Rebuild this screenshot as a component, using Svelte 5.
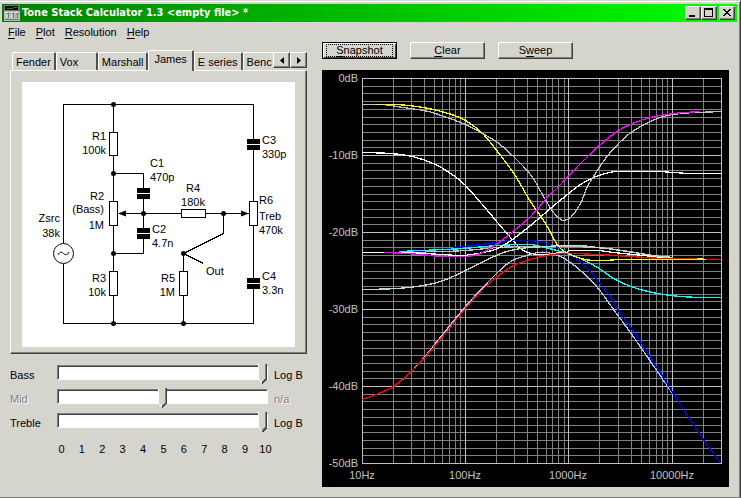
<script lang="ts">
	type Point = [number, number];
	type Curve = { name: string; color: string; points: Point[] };

	const menus = ['File', 'Plot', 'Resolution', 'Help'];
	const tabs = ['Fender', 'Vox', 'Marshall', 'James', 'E series', 'Benc'];
	const actions = [
		{ label: 'Snapshot', key: 0 },
		{ label: 'Clear', key: 0 },
		{ label: 'Sweep', key: 1 }
	];

	let activeTab = $state('James');

	let controls = $state([
		{ id: 'bass', label: 'Bass', value: 10, taper: 'Log B', disabled: false },
		{ id: 'mid', label: 'Mid', value: 5, taper: 'n/a', disabled: true },
		{ id: 'treble', label: 'Treble', value: 10, taper: 'Log B', disabled: false }
	]);

	const scale = [0, 1, 2, 3, 4, 5, 6, 7, 8, 9, 10];

	// Plot area, in graph units
	const left = 40;
	const top = 8;
	const width = 359;
	const height = 385;
	const decade = 103.2;

	const xOf = (hz: number) => left + Math.round(Math.log10(hz / 10) * decade);
	const yOf = (db: number) => top + Math.round(-db * 7.7);

	const freqs: number[] = [];
	for (let base = 10; base <= 10000; base *= 10) {
		for (let n = 1; n < 10; n++) {
			if (base * n < 30000) freqs.push(base * n);
		}
	}
	const minorFreqs = freqs.filter((hz) => Math.log10(hz) % 1 !== 0);
	const majorFreqs = [10, 100, 1000, 10000];
	const levels = Array.from({ length: 51 }, (_, i) => -i);
	const minorLevels = levels.filter((db) => db % 10 !== 0);
	const majorLevels = levels.filter((db) => db % 10 === 0);

	const curves: Curve[] = [
		{
			name: 'white scoop', color: '#ffffff',
			points: [[0, 74], [28, 75], [50, 78], [73, 86], [91, 97], [103, 107], [125, 132], [135, 144], [148, 159], [158, 170], [168, 175], [183, 176], [198, 174], [210, 172], [235, 172], [251, 174], [271, 176], [291, 178], [315, 180], [359, 181]]
		},
		{
			name: 'flat', color: '#c0c0c0',
			points: [[0, 174], [33, 174], [80, 173], [103, 172], [135, 169], [168, 168], [201, 168], [235, 169], [260, 172], [291, 177], [315, 180], [359, 181]]
		},
		{
			name: 'light blue', color: '#a6caf0',
			points: [[0, 321], [16, 315], [31, 308], [50, 292], [65, 275], [81, 255], [103, 228], [135, 194], [150, 182], [168, 176], [175, 174], [185, 174], [198, 178], [208, 184], [218, 192], [235, 209], [251, 231], [270, 257], [310, 315]]
		},
		{
			name: 'blue', color: '#0000ff',
			points: [[37, 174], [80, 171], [103, 168], [135, 164], [148, 162], [168, 162], [181, 164], [198, 170], [208, 176], [218, 184], [231, 197], [248, 219], [258, 235], [274, 257], [310, 314], [341, 361], [358, 385]]
		},
		{
			name: 'cyan', color: '#00ffff',
			points: [[37, 173], [81, 171], [101, 170], [135, 167], [168, 166], [178, 168], [198, 173], [218, 180], [235, 189], [251, 200], [271, 209], [295, 215], [318, 218], [341, 219], [359, 219]]
		},
		{
			name: 'white treble', color: '#ffffff',
			points: [[0, 174], [41, 174], [80, 176], [101, 177], [121, 174], [135, 170], [150, 161], [168, 147], [188, 130], [205, 116], [218, 106], [231, 99], [243, 95], [253, 93], [295, 93], [311, 94], [328, 95], [359, 95]]
		},
		{
			name: 'pale green', color: '#c0dcc0',
			points: [[0, 211], [35, 210], [61, 207], [81, 202], [103, 192], [121, 183], [141, 174], [158, 170], [168, 169], [201, 167], [218, 167], [235, 169], [251, 171], [271, 174], [291, 177], [311, 179]]
		},
		{
			name: 'mid dip', color: '#c0c0c0',
			points: [[0, 26], [20, 26], [41, 29], [61, 32], [73, 35], [103, 46], [120, 55], [135, 64], [152, 79], [168, 96], [175, 107], [181, 118], [191, 134], [197, 140], [201, 142], [208, 139], [218, 125], [225, 108], [231, 98], [243, 80], [256, 65], [270, 53], [288, 43], [301, 38], [318, 35], [335, 34], [359, 33]]
		},
		{
			name: 'red', color: '#ff0000',
			points: [[0, 321], [16, 315], [31, 308], [50, 292], [65, 276], [81, 257], [103, 230], [121, 210], [135, 198], [151, 187], [168, 181], [185, 177], [201, 175], [235, 176], [268, 178], [301, 180], [359, 181]]
		},
		{
			name: 'yellow', color: '#ffff00',
			points: [[12, 26], [33, 26], [61, 29], [86, 35], [103, 42], [120, 55], [135, 73], [152, 96], [168, 123], [183, 145], [196, 168], [206, 175], [218, 180], [230, 182], [243, 182], [258, 181], [343, 181]]
		},
		{
			name: 'magenta', color: '#ff00ff',
			points: [[22, 174], [45, 175], [81, 178], [103, 178], [118, 175], [135, 165], [148, 155], [168, 138], [183, 121], [198, 106], [218, 85], [238, 66], [256, 52], [270, 45], [288, 39], [311, 35], [338, 33]]
		}
	];

	// Catmull-Rom spline through the sampled points
	function toPath(points: Point[]) {
		let d = `M${points[0][0]} ${points[0][1]}`;
		for (let i = 0; i < points.length - 1; i++) {
			const a = points[i - 1] ?? points[i];
			const b = points[i];
			const c = points[i + 1];
			const e = points[i + 2] ?? c;
			const k = (c[0] - b[0]) / 3;
			const m1 = (c[1] - a[1]) / (c[0] - a[0]);
			const m2 = (e[1] - b[1]) / (e[0] - b[0]);
			d += `C${b[0] + k} ${b[1] + m1 * k} ${c[0] - k} ${c[1] - m2 * k} ${c[0]} ${c[1]}`;
		}
		return d;
	}

	// Schematic parts
	const upright = [[87, 50, 23], [87, 119, 24], [87, 189, 24], [157, 189, 24], [227, 119, 24]];
	const caps = [[115, 106], [115, 146], [225, 57], [225, 196]];
	const nodes = [[91, 22], [91, 91], [91, 171], [91, 241], [121, 131], [201, 131], [161, 171], [161, 241]];
	const notes: [string, number, number, string][] = [
		['R1', 84, 58, 'end'], ['100k', 84, 72, 'end'],
		['R2', 82, 118, 'end'], ['(Bass)', 82, 131, 'end'], ['1M', 82, 147, 'end'],
		['Zsrc', 38, 140, 'end'], ['38k', 38, 155, 'end'],
		['R3', 84, 200, 'end'], ['10k', 84, 214, 'end'],
		['C1', 128, 85, 'start'], ['470p', 128, 99, 'start'],
		['C2', 130, 151, 'start'], ['4.7n', 130, 165, 'start'],
		['R4', 171, 110, 'middle'], ['180k', 171, 124, 'middle'],
		['R5', 153, 200, 'end'], ['1M', 153, 214, 'end'],
		['Out', 184, 193, 'start'],
		['C3', 240, 62, 'start'], ['330p', 240, 76, 'start'],
		['R6', 237, 122, 'start'], ['Treb', 237, 138, 'start'], ['470k', 237, 152, 'start'],
		['C4', 240, 198, 'start'], ['3.3n', 240, 212, 'start']
	];
</script>

<div class="window">
	<header class="titlebar">
		<svg class="app-icon" viewBox="0 0 16 16" shape-rendering="crispEdges" aria-hidden="true">
			<rect width="16" height="16" fill="#b8b8b8" />
			<rect width="16" height="6" fill="#707070" />
			<rect x="1" y="1" width="13" height="4" fill="#000" />
			<path d="M3 3.5h6M9 2.5h4" stroke="#009000" />
			<path d="M2 8.5h3M7 8.5h3M12 8.5h3M4.500 9v4M9.500 9v4M13.500 9v4M1 14.500h14" stroke="#777" fill="none" />
			<path d="M1 7.5h3M6 7.5h3M11 7.5h3M2.500 9v4M7.500 9v4" stroke="#eee" fill="none" />
		</svg>
		<h1>Tone Stack Calculator 1.3 &lt;empty file&gt; *</h1>
		<div class="window-buttons">
			<button type="button" aria-label="Minimize">
				<svg viewBox="0 0 12 10" shape-rendering="crispEdges"><path d="M2 8h6" stroke="#000" stroke-width="2" /></svg>
			</button>
			<button type="button" aria-label="Maximize">
				<svg viewBox="0 0 12 10" shape-rendering="crispEdges"><path d="M1.500 1v7.500h8V1M1 1h9" stroke="#000" fill="none" /><path d="M1 1h9" stroke="#000" stroke-width="2" /></svg>
			</button>
			<button type="button" class="close" aria-label="Close">
				<svg viewBox="0 0 12 10" shape-rendering="crispEdges"><path d="M2 1h2v1h1v1h2V2h1V1h2v1H9v1H8v1H7v1h1v1h1v1h1v1H8V7H7V6H5v1H4v1H2V7h1V6h1V5h1V4H4V3H3V2H2z" /></svg>
			</button>
		</div>
	</header>

	<nav class="menubar">
		{#each menus as menu}
			<button type="button"><u>{menu[0]}</u>{menu.slice(1)}</button>
		{/each}
	</nav>

	<main>
		<section class="left">
			<div class="tab-row">
				<div class="tabs" role="tablist">
					{#each tabs as tab}
						<button
							type="button"
							role="tab"
							class="tab"
							class:active={tab === activeTab}
							aria-selected={tab === activeTab}
							onclick={() => (activeTab = tab)}>{tab}</button>
					{/each}
				</div>
				<button type="button" class="scroll" aria-label="Previous tabs">
					<svg viewBox="0 0 4 7"><path d="M4 0v7L0 3.500z" /></svg>
				</button>
				<button type="button" class="scroll" aria-label="Next tabs">
					<svg viewBox="0 0 4 7"><path d="M0 0v7L4 3.500z" /></svg>
				</button>
			</div>

			<div class="panel">
				<svg class="schematic" viewBox="0 0 273 265" role="img" aria-label="James tone stack">
					<g transform="translate(.5 .5)" fill="none" stroke="#000" shape-rendering="crispEdges">
						<path d="M41 161V22H231V241H41V181M91 22V241M91 91H121V171H91M96 131H226M201 131V151M161 171V241" />
						{#each upright as [x, y, h]}
							<rect {x} {y} width="8" height={h} fill="#fff" />
						{/each}
						<rect x="159" y="127" width="24" height="8" fill="#fff" />
						<path d="M201 151L161 171L181 181" />
					</g>
					{#each caps as [x, y]}
						<rect {x} {y} width="13" height="11" />
						<rect {x} y={y + 5} width="13" height="1" fill="#fff" />
					{/each}
					{#each nodes as [x, y]}
						<circle cx={x + 0.5} cy={y + 0.5} r="2.500" />
					{/each}
					<path d="M96 131.500l8-3v6zM227 131.500l-8-3v6z" />
					<circle cx="41.500" cy="171.500" r="10" fill="#fff" stroke="#000" />
					<path d="M36 173c2-4 4-3 5.500-1.500s4 2 5.500-1.500" fill="none" stroke="#000" />
					{#each notes as [text, x, y, anchor]}
						<text {x} {y} text-anchor={anchor}>{text}</text>
					{/each}
				</svg>
			</div>

			<div class="sliders">
				{#each controls as control (control.id)}
					<label for={control.id} class:off={control.disabled}>{control.label}</label>
					<input
						id={control.id}
						type="range"
						min="0"
						max="10"
						step="0.1"
						bind:value={control.value}
						disabled={control.disabled} />
					<span class:off={control.disabled}>{control.taper}</span>
				{/each}
				<div class="scale">
					{#each scale as n}
						<span>{n}</span>
					{/each}
				</div>
			</div>
		</section>

		<section class="right">
			<div class="actions">
				{#each actions as action, i}
					<button type="button" class:default={i === 0}>
						<span>{action.label.slice(0, action.key)}<u>{action.label[action.key]}</u>{action.label.slice(action.key + 1)}</span>
					</button>
				{/each}
			</div>

			<svg class="graph" viewBox="0 0 407 417" role="img" aria-label="Frequency response">
				<g shape-rendering="crispEdges">
					<g fill="#808080">
						{#each minorFreqs as hz}
							<rect x={xOf(hz)} y={top} width="1" {height} />
						{/each}
						{#each minorLevels as db}
							<rect x={left} y={yOf(db)} {width} height="1" />
						{/each}
					</g>
					<g fill="#c0c0c0">
						{#each majorFreqs as hz}
							<rect x={xOf(hz)} y={top} width="1" {height} />
						{/each}
						<rect x={left + width} y={top} width="1" height={height + 1} />
						{#each majorLevels as db}
							<rect x={left} y={yOf(db)} {width} height="1" />
						{/each}
					</g>
					<g transform="translate({left + 0.5} {top + 0.5})" fill="none" stroke-width="1.3">
						{#each curves as curve (curve.name)}
							<path d={toPath(curve.points)} stroke={curve.color} />
						{/each}
					</g>
				</g>
				<g fill="#c0c0c0">
					{#each majorLevels as db}
						<text x="36" y={yOf(db) + 4} text-anchor="end">{db}dB</text>
					{/each}
					{#each majorFreqs as hz}
						<text x={xOf(hz)} y="409" text-anchor="middle">{hz}Hz</text>
					{/each}
				</g>
			</svg>
		</section>
	</main>
</div>

<style>
	:global(body) {
		margin: 0;
		background: #d5d5ce;
	}

	.window {
		box-sizing: border-box;
		min-height: 100vh;
		padding: 2px 2px 0;
		border-top: 1px solid #d5d5ce;
		border-right: 1px solid #404040;
		border-bottom: 1px solid #808080;
		box-shadow: inset 0 1px #fff, inset -1px 0 #808080;
		background: #d5d5ce;
		color: #000;
		font: 11px/14px 'Liberation Sans', Arial, sans-serif;
	}

	button {
		padding: 0;
		border: 0;
		background: #d5d5ce;
		color: inherit;
		font: inherit;
	}

	svg {
		display: block;
	}

	text {
		font: 11px 'Liberation Sans', Arial, sans-serif;
	}

	.titlebar {
		display: flex;
		align-items: center;
		height: 18px;
		margin: 1px 1px 0 0;
		padding: 0 2px;
		background: linear-gradient(to right, #008000, #00ff00);
	}

	.app-icon {
		width: 16px;
		height: 16px;
	}

	h1 {
		flex: 1;
		margin: 0 0 0 2px;
		color: #fff;
		font: bold 11px/16px 'DejaVu Sans Condensed', 'DejaVu Sans', sans-serif;
		white-space: nowrap;
	}

	.window-buttons {
		display: flex;
	}

	.window-buttons button {
		width: 16px;
		height: 14px;
		padding: 1px;
		border: 1px solid;
		border-color: #fff #404040 #404040 #fff;
		box-shadow: inset -1px -1px #808080;
	}

	.window-buttons .close {
		margin-left: 2px;
	}

	.window-buttons svg {
		width: 12px;
		height: 10px;
	}

	.menubar {
		display: flex;
		height: 20px;
		padding-left: 5px;
		gap: 8px;
	}

	.menubar button {
		padding: 0 1px;
	}

	u {
		text-underline-offset: 2px;
	}

	main {
		display: flex;
		gap: 15px;
		padding: 0 9px 9px 8px;
	}

	.left {
		flex: none;
		width: 297px;
		padding-top: 8px;
	}

	.right {
		flex: 1;
		min-width: 0;
	}

	.tab-row {
		display: flex;
		align-items: flex-start;
		height: 20px;
	}

	.tabs {
		display: flex;
		flex: 1;
		align-items: flex-end;
		min-width: 0;
		height: 21px;
		padding-left: 2px;
		overflow: hidden;
	}

	.tab {
		flex: none;
		min-width: 42px;
		height: 18px;
		margin-bottom: 1px;
		padding: 0 3px;
		border: 1px solid #fff;
		border-width: 1px 2px 0 1px;
		border-right-color: #505050;
		border-radius: 2px 2px 0 0;
		text-align: left;
	}

	.tab.active {
		z-index: 1;
		height: 21px;
		margin-bottom: 0;
		padding: 0 5px 4px;
	}

	.scroll {
		display: flex;
		flex: none;
		align-items: center;
		justify-content: center;
		width: 17px;
		height: 16px;
		margin-top: 2px;
		border: 1px solid;
		border-color: #fff #404040 #404040 #fff;
		box-shadow: inset -1px -1px #808080;
	}

	.scroll svg {
		width: 4px;
		height: 7px;
	}

	.panel {
		padding: 11px;
		padding-bottom: 6px;
		border: 1px solid;
		border-color: #fff #404040 #404040 #fff;
		box-shadow: inset -1px -1px #808080;
	}

	.schematic {
		width: 100%;
		background: #fff;
	}

	.sliders {
		display: grid;
		grid-template-columns: 47px 211px 1fr;
		grid-auto-rows: 24px;
		align-items: center;
		padding-top: 6px;
	}

	.sliders > label,
	.sliders > span {
		padding-top: 5px;
		white-space: nowrap;
	}

	.sliders > span {
		padding-left: 6px;
	}

	.sliders .off {
		color: #808080;
		text-shadow: 1px 1px #fff;
	}

	input {
		width: 100%;
		height: 22px;
		margin: 0;
		background: transparent;
		appearance: none;
	}

	input::-webkit-slider-runnable-track {
		box-sizing: border-box;
		height: 15px;
		border: 1px solid;
		border-color: #808080 #fff #fff #808080;
		box-shadow: inset 1px 1px #404040;
		background: #fff;
	}

	/* pointed thumb: square body with two diagonal halves below it */
	input::-webkit-slider-thumb {
		width: 9px;
		height: 20px;
		margin: -2px 0 0;
		background:
			linear-gradient(to right, #fff 1px, #d5d5ce 1px 7px, #808080 7px 8px, #404040 8px) top / 9px 15px no-repeat,
			linear-gradient(to top right, transparent 50%, #fff 50% 60%, #d5d5ce 60%) bottom left / 4px 5px no-repeat,
			linear-gradient(to bottom right, #d5d5ce 25%, #808080 25% 40%, #404040 40% 60%, transparent 60%) bottom right / 5px 5px no-repeat;
		appearance: none;
	}

	.scale {
		display: flex;
		grid-column: 2 / 4;
		justify-content: space-between;
		width: 217px;
		margin: 10px 0 0 -2px;
	}

	.scale span {
		width: 13px;
		text-align: center;
	}

	.actions {
		display: flex;
		gap: 13px;
		margin-bottom: 11px;
	}

	.actions button {
		width: 75px;
		height: 17px;
		padding: 1px;
		border: 1px solid;
		border-color: #fff #404040 #404040 #fff;
		box-shadow: inset -1px -1px #808080;
		line-height: 13px;
	}

	.actions .default {
		border-color: #000;
		box-shadow: inset 1px 1px #fff, inset -1px -1px #404040;
	}

	.actions .default span {
		display: block;
		margin: 0 2px;
		outline: 1px dotted #000;
		outline-offset: -1px;
	}

	.graph {
		width: 100%;
		background: #000;
	}
</style>
